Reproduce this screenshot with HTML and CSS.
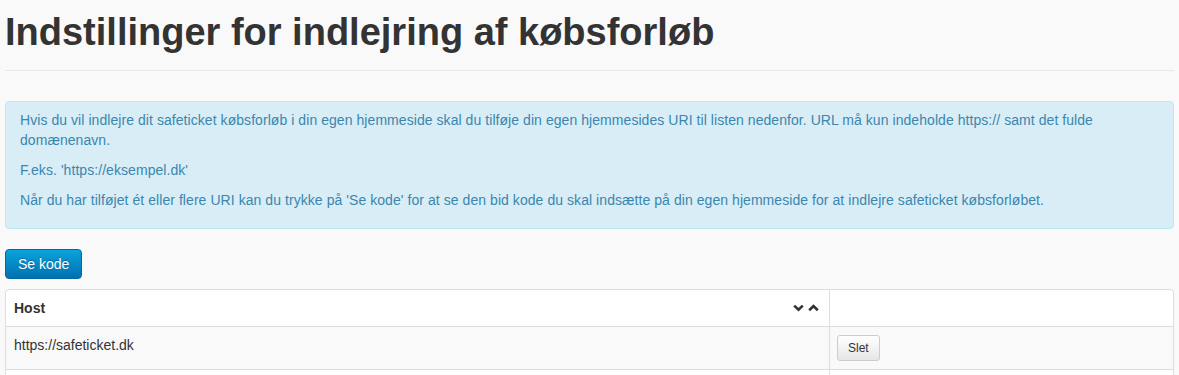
FILE: index.html
```html
<!DOCTYPE html>
<html lang="da">

<head>
  <meta charset="UTF-8" />
  <title>Indstillinger for indlejring af købsforløb</title>
  <link rel="stylesheet" href="styles.css">
</head>

<body>

  <div class="page">
    <div class="page-header">
      <h1>Indstillinger for indlejring af købsforløb</h1>
    </div>

    <div class="alert-info">
      <p>Hvis du vil indlejre dit safeticket købsforløb i din egen hjemmeside skal du tilføje din egen hjemmesides URI til listen nedenfor. URL må kun indeholde https:// samt det fulde domænenavn.</p>
      <p>F.eks. 'https://eksempel.dk'</p>
      <p>Når du har tilføjet ét eller flere URI kan du trykke på 'Se kode' for at se den bid kode du skal indsætte på din egen hjemmeside for at indlejre safeticket købsforløbet.</p>
    </div>

    <button class="btn-primary" type="button">Se kode</button>

    <table class="host-table">
      <thead>
        <tr>
          <th class="col-host">
            <div class="th-inner">
              <span>Host</span>
              <span class="sort-icons">
                <svg width="11" height="8" viewBox="0 0 11 8"><path d="M1.2 1.6 L5.5 5.8 L9.8 1.6" fill="none" stroke="#333" stroke-width="2.6"/></svg>
                <svg width="11" height="8" viewBox="0 0 11 8"><path d="M1.2 6.2 L5.5 2 L9.8 6.2" fill="none" stroke="#333" stroke-width="2.6"/></svg>
              </span>
            </div>
          </th>
          <th></th>
        </tr>
      </thead>
      <tbody>
        <tr>
          <td>https://safeticket.dk</td>
          <td><button class="btn-small" type="button">Slet</button></td>
        </tr>
        <tr>
          <td class="empty"></td>
          <td class="empty"></td>
        </tr>
      </tbody>
    </table>
  </div>

</body>

</html>
```

FILE: styles.css
```css
body {
  background: #f9f9f9;
  font-family: "Liberation Sans", Arial, sans-serif;
  font-size: 14px;
  line-height: 20px;
  color: #333;
  margin: 0;
}

.page {
  padding: 0 5px;
}

.page-header {
  padding: 12px 0 18px;
  border-bottom: 1px solid #e8e8e8;
  margin-bottom: 30px;
}

h1 {
  margin: 0;
  font-size: 38px;
  line-height: 40px;
  font-weight: bold;
  color: #333;
}

.alert-info {
  background: #d9edf7;
  border: 1px solid #bce8f1;
  border-radius: 4px;
  color: #3a87ad;
  padding: 8px 35px 8px 14px;
  margin-bottom: 20px;
  letter-spacing: 0.06px;
}

.alert-info p {
  margin: 0 0 10px;
}

.btn-primary {
  display: block;
  font-family: inherit;
  font-size: 14px;
  line-height: 20px;
  padding: 4px 12px;
  color: #fff;
  text-shadow: 0 -1px 0 rgba(0, 0, 0, 0.25);
  background: linear-gradient(#0aa3de, #0070b0);
  border: 1px solid #0068a4;
  border-radius: 4px;
  cursor: pointer;
  margin-bottom: 10px;
}

.host-table {
  width: 100%;
  border-collapse: separate;
  border-spacing: 0;
  border: 1px solid #ddd;
  border-radius: 4px;
  background: #fff;
}

.host-table th,
.host-table td {
  text-align: left;
  padding: 8px;
  line-height: 20px;
  vertical-align: top;
  border-left: 1px solid #ddd;
}

.host-table th:first-child,
.host-table td:first-child {
  border-left: none;
}

.host-table td {
  border-top: 1px solid #ddd;
}

.host-table tbody tr:nth-child(odd) td {
  background: #f9f9f9;
}

.col-host {
  width: 807px;
}

.th-inner {
  display: flex;
  justify-content: space-between;
  align-items: center;
}

.sort-icons {
  display: flex;
  gap: 4px;
  margin-right: 2px;
}

.btn-small {
  font-family: inherit;
  font-size: 12px;
  line-height: 16px;
  padding: 4px 10px;
  margin-left: -1px;
  color: #333;
  background: linear-gradient(#fff, #e6e6e6);
  border: 1px solid #ccc;
  border-radius: 3px;
  cursor: pointer;
}

.empty {
  height: 20px;
}
```
